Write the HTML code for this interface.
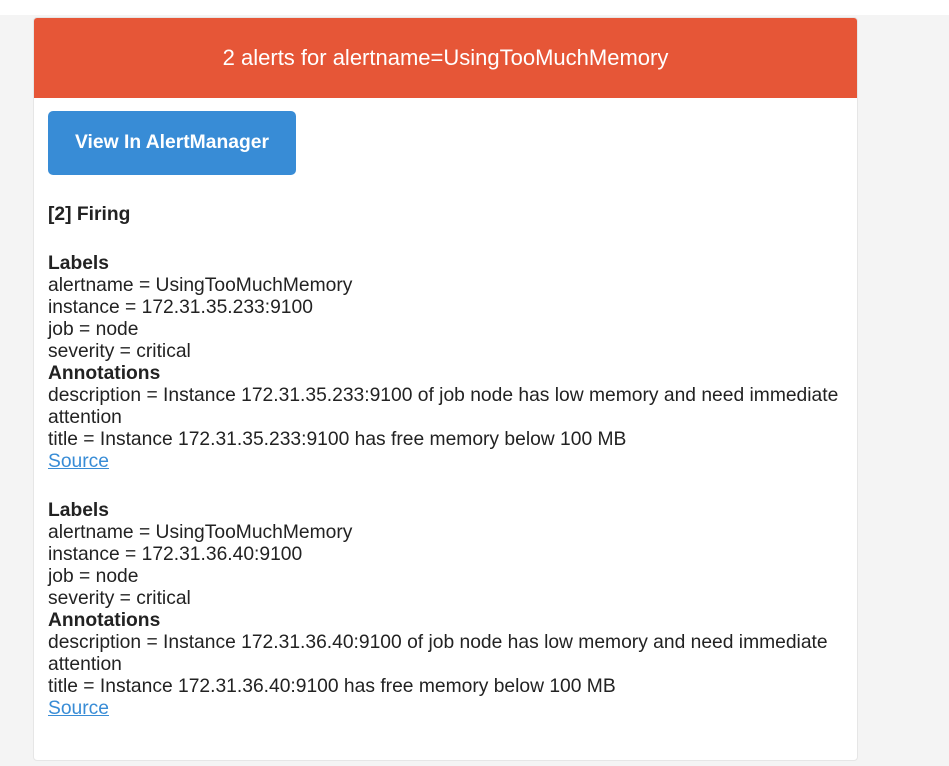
<!DOCTYPE html>
<html><head><meta charset="utf-8"><style>
html,body{margin:0;padding:0}
body{width:949px;height:766px;background:#f4f4f4;font-family:"Liberation Sans",Arial,sans-serif;color:#222;position:relative;overflow:hidden}
.top{position:absolute;left:0;top:0;width:949px;height:15px;background:#fff}
.card{position:absolute;left:33px;top:17px;width:823px;height:742px;background:#fff;border:1px solid #e6e6e6;border-radius:4px;overflow:hidden}
.hdr{height:80px;background:#e65637;color:#fff;font-size:22px;text-align:center;line-height:80px}
.btn{position:absolute;left:14px;top:93px;width:248px;height:64px;background:#388cd6;border-radius:5px;color:#fff;font-weight:bold;font-size:19.3px;text-align:center;line-height:64px}
.c{position:absolute;left:14px;top:186px;width:800px;font-size:19.25px;line-height:22px}
b{font-weight:bold}
a{color:#388cd6;text-decoration:underline}
</style></head><body>
<div class="top"></div>
<div class="card">
<div class="hdr">2 alerts for alertname=UsingTooMuchMemory</div>
<div class="btn">View In AlertManager</div>
<div class="c">
<div><b>[2] Firing</b></div>
<div style="height:27px"></div>
<b>Labels</b><br>alertname = UsingTooMuchMemory<br>instance = 172.31.35.233:9100<br>job = node<br>severity = critical<br><b>Annotations</b><br>description = Instance 172.31.35.233:9100 of job node has low memory and need immediate attention<br>title = Instance 172.31.35.233:9100 has free memory below 100 MB<br><a>Source</a><br>
<div style="height:27px"></div>
<b>Labels</b><br>alertname = UsingTooMuchMemory<br>instance = 172.31.36.40:9100<br>job = node<br>severity = critical<br><b>Annotations</b><br>description = Instance 172.31.36.40:9100 of job node has low memory and need immediate attention<br>title = Instance 172.31.36.40:9100 has free memory below 100 MB<br><a>Source</a>
</div>
</div>
</body></html>
